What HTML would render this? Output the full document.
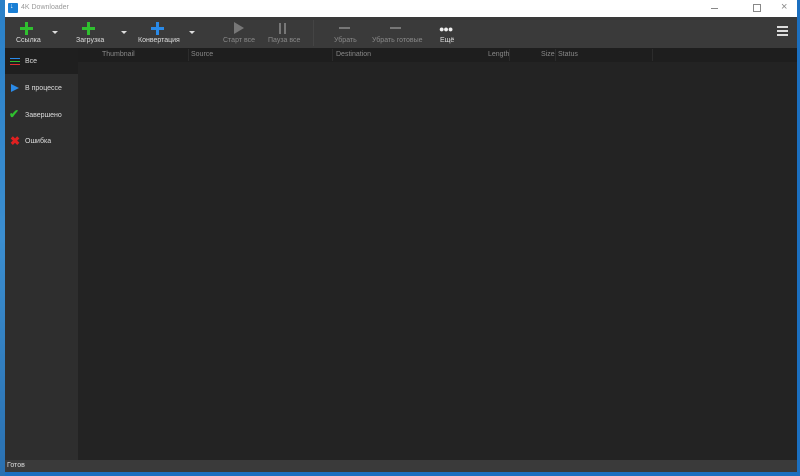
<!DOCTYPE html><html><head><style>
body{margin:0;width:800px;height:476px;overflow:hidden;background:#1b6fc0;font-family:"Liberation Sans","Noto Sans CJK SC",sans-serif;position:relative}
.a{position:absolute}
.t{font-size:7px;color:#ddd;white-space:nowrap}
.g{color:#888}
</style></head><body>
<div class="a" style="left:0;top:0;width:5px;height:476px;background:linear-gradient(#2a80c8,#3b8ed0 50%,#2a70b0)"></div>
<div class="a" style="left:5px;top:0;width:792px;height:472px;background:#232323">
 <div class="a" style="left:0;top:0;width:792px;height:17px;background:#fff"></div>
 <div class="a" style="left:3px;top:3px;width:10px;height:10px;background:#1a7fd4;border-radius:1px"></div>
 <div class="a" style="left:5px;top:4px;width:6px;height:6px;color:#fff;font-size:7px;line-height:6px">↓</div>
 <div class="a t" style="left:16px;top:4px;color:#999;font-size:7px">4K Downloader</div>
 <div class="a" style="left:706px;top:8px;width:7px;height:1px;background:#888"></div>
 <div class="a" style="left:748px;top:4px;width:6px;height:6px;border:1px solid #888"></div>
 <div class="a" style="left:776px;top:1px;color:#888;font-size:11px">×</div>
 <div class="a" style="left:0;top:17px;width:792px;height:31px;background:#3a3a3a"></div>
 <div class="a" style="left:0;top:48px;width:792px;height:14px;background:#1e1e1e"></div>
 <div class="a" style="left:0;top:48px;width:73px;height:26px;background:#1f1f1f"></div>
 <div class="a" style="left:0;top:74px;width:73px;height:386px;background:#2e2e2e"></div>
 <div class="a" style="left:0;top:460px;width:792px;height:12px;background:#3a3a3a"></div>
 <div class="a t" style="left:2px;top:462px">Готов</div>
</div>
<div class="a" style="left:20px;top:27px;width:13px;height:3px;background:#2fc02f"></div><div class="a" style="left:25px;top:22px;width:3px;height:13px;background:#2fc02f"></div>
<div class="a t" style="left:16px;top:37px">Ссылка</div>
<div class="a" style="left:52px;top:31px;border:3px solid transparent;border-top:3px solid #ddd"></div>
<div class="a" style="left:82px;top:27px;width:13px;height:3px;background:#2fc02f"></div><div class="a" style="left:87px;top:22px;width:3px;height:13px;background:#2fc02f"></div>
<div class="a t" style="left:76px;top:37px">Загрузка</div>
<div class="a" style="left:121px;top:31px;border:3px solid transparent;border-top:3px solid #ddd"></div>
<div class="a" style="left:151px;top:27px;width:13px;height:3px;background:#2a8ae8"></div><div class="a" style="left:156px;top:22px;width:3px;height:13px;background:#2a8ae8"></div>
<div class="a t" style="left:138px;top:37px">Конвертация</div>
<div class="a" style="left:189px;top:31px;border:3px solid transparent;border-top:3px solid #ddd"></div>
<div class="a" style="left:234px;top:22px;width:0;height:0;border-left:10px solid #777;border-top:6px solid transparent;border-bottom:6px solid transparent"></div>
<div class="a t g" style="left:223px;top:37px">Старт все</div>
<div class="a" style="left:279px;top:23px;width:2px;height:11px;background:#777"></div><div class="a" style="left:284px;top:23px;width:2px;height:11px;background:#777"></div>
<div class="a t g" style="left:268px;top:37px">Пауза все</div>
<div class="a" style="left:313px;top:20px;width:1px;height:26px;background:#444"></div>
<div class="a" style="left:339px;top:27px;width:11px;height:2px;background:#777"></div>
<div class="a t g" style="left:334px;top:37px">Убрать</div>
<div class="a" style="left:390px;top:27px;width:11px;height:2px;background:#777"></div>
<div class="a t g" style="left:372px;top:37px">Убрать готовые</div>
<div class="a" style="left:439px;top:24px;color:#eee;font-size:9px;letter-spacing:-1px">●●●</div>
<div class="a t" style="left:440px;top:37px">Ещё</div>
<div class="a" style="left:777px;top:26px;width:11px;height:2px;background:#ddd;box-shadow:0 4px #ddd,0 8px #ddd"></div>
<div class="a t g" style="left:102px;top:51px">Thumbnail</div>
<div class="a t g" style="left:191px;top:51px">Source</div>
<div class="a t g" style="left:336px;top:51px">Destination</div>
<div class="a t g" style="left:488px;top:51px">Length</div>
<div class="a t g" style="left:541px;top:51px">Size</div>
<div class="a t g" style="left:558px;top:51px">Status</div>
<div class="a" style="left:188px;top:49px;width:1px;height:12px;background:#2c2c2c"></div>
<div class="a" style="left:332px;top:49px;width:1px;height:12px;background:#2c2c2c"></div>
<div class="a" style="left:509px;top:49px;width:1px;height:12px;background:#2c2c2c"></div>
<div class="a" style="left:555px;top:49px;width:1px;height:12px;background:#2c2c2c"></div>
<div class="a" style="left:652px;top:49px;width:1px;height:12px;background:#2c2c2c"></div>
<div class="a" style="left:10px;top:58px;width:10px;height:1px;background:#2a8ae8"></div>
<div class="a" style="left:10px;top:61px;width:10px;height:1px;background:#2fc02f"></div>
<div class="a" style="left:10px;top:64px;width:10px;height:1px;background:#e03030"></div>
<div class="a t" style="left:25px;top:58px">Все</div>
<div class="a" style="left:11px;top:84px;border-left:8px solid #2a8ae8;border-top:4px solid transparent;border-bottom:4px solid transparent"></div>
<div class="a t" style="left:25px;top:85px">В процессе</div>
<div class="a" style="left:9px;top:107px;color:#2fc02f;font-size:12px;font-weight:bold">✔</div>
<div class="a t" style="left:25px;top:112px">Завершено</div>
<div class="a" style="left:10px;top:134px;color:#e02020;font-size:12px;font-weight:bold">✖</div>
<div class="a t" style="left:25px;top:138px">Ошибка</div>
</body></html>
